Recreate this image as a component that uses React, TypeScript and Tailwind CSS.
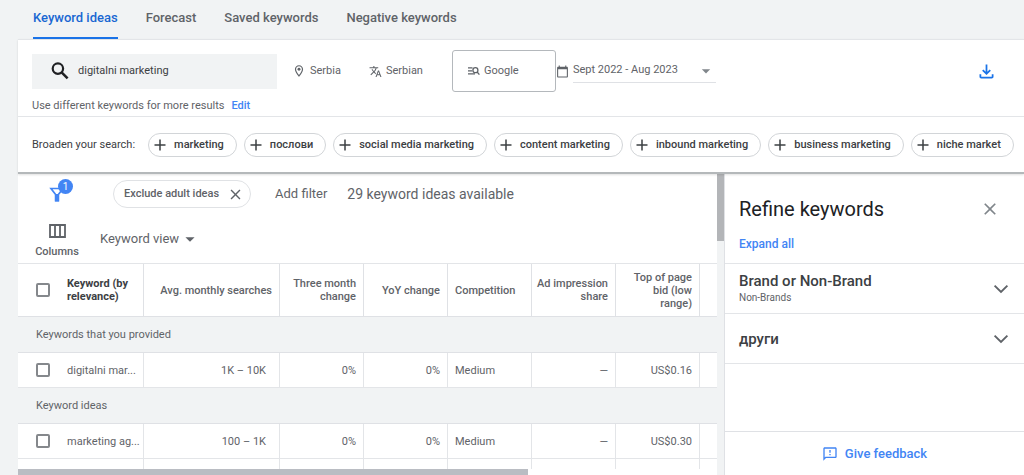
import React, { useState } from 'react';
import {
  MdArrowDropDown,
  MdCalendarToday,
  MdClose,
  MdOutlineFeedback,
  MdOutlineFileDownload,
  MdOutlineLocationOn,
  MdTranslate,
} from 'react-icons/md';

const TABS = ['Keyword ideas', 'Forecast', 'Saved keywords', 'Negative keywords'];

const BROADEN = [
  'marketing',
  'послови',
  'social media marketing',
  'content marketing',
  'inbound marketing',
  'business marketing',
  'niche market',
];

interface KeywordRow {
  keyword: string;
  searches: string;
  threeMonth: string;
  yoy: string;
  competition: string;
  share: string;
  lowBid: string;
}

const PROVIDED: KeywordRow[] = [
  { keyword: 'digitalni mar...', searches: '1K – 10K', threeMonth: '0%', yoy: '0%', competition: 'Medium', share: '—', lowBid: 'US$0.16' },
];
const IDEAS: KeywordRow[] = [
  { keyword: 'marketing ag...', searches: '100 – 1K', threeMonth: '0%', yoy: '0%', competition: 'Medium', share: '—', lowBid: 'US$0.30' },
];

const REFINE: { title: string; sub?: string }[] = [
  { title: 'Brand or Non-Brand', sub: 'Non-Brands' },
  { title: 'други' },
];

function SearchIcon() {
  return (
    <svg width="22" height="22" viewBox="0 0 22 22" fill="none" stroke="currentColor" strokeWidth="2.2" aria-hidden="true">
      <circle cx="8.9" cy="8.6" r="5.2" />
      <path d="M12.6 12.4l6 6" strokeWidth="2.6" />
    </svg>
  );
}

// List lines with a magnifier, used for the search network setting
function NetworkIcon() {
  return (
    <svg width="13" height="12" viewBox="0 0 13 12" fill="none" stroke="currentColor" strokeWidth="1.3" aria-hidden="true">
      <path d="M1 2.9h4.5M1 5.9h4M1 8.9h7" />
      <circle cx="8.4" cy="5.2" r="2.5" />
      <path d="M10.1 7l2.3 2.7" />
    </svg>
  );
}

function PlusIcon() {
  return (
    <svg width="18" height="18" viewBox="0 0 18 18" fill="none" stroke="currentColor" strokeWidth="1.5" aria-hidden="true">
      <path d="M9 3.5v11M3.5 9h11" />
    </svg>
  );
}

function FunnelIcon() {
  return (
    <svg width="18" height="18" viewBox="0 0 18 18" aria-hidden="true">
      <path d="M3 3.5h12l-4.6 6v6.2H7.6V9.5z" fill="none" stroke="currentColor" strokeWidth="1.7" />
      <path d="M7 9h4v7.4H7z" fill="currentColor" />
    </svg>
  );
}

function ColumnsIcon() {
  return (
    <svg width="17" height="14" viewBox="0 0 17 14" fill="none" stroke="currentColor" strokeWidth="1.8" aria-hidden="true">
      <path d="M1 1h15v12H1zM6 1v12M11 1v12" />
    </svg>
  );
}

function ChevronIcon() {
  return (
    <svg width="16" height="10" viewBox="0 0 16 10" fill="none" stroke="currentColor" strokeWidth="1.9" aria-hidden="true">
      <path d="M1.6 1.6L8 8l6.4-6.4" />
    </svg>
  );
}

function Check({ label }: { label: string }) {
  return (
    <input
      type="checkbox"
      aria-label={label}
      className="block size-[14px] appearance-none rounded-[2px] border-2 border-[#85888c] bg-white checked:bg-[#1a73e8]"
    />
  );
}

function GroupRow({ title }: { title: string }) {
  return (
    <tr>
      <th colSpan={9} scope="colgroup" className="h-9 border-b border-[#dfe1e5] bg-[#f1f3f4] pl-[18px] text-left font-normal">
        {title}
      </th>
    </tr>
  );
}

const CELL = 'h-[35px] border-r border-b border-[#e3e5e8] px-[7px]';

function DataRow({ row }: { row: KeywordRow }) {
  return (
    <tr>
      <td className="h-[35px] border-b border-[#e3e5e8] pl-[18px]"><Check label={row.keyword} /></td>
      <td className={`${CELL} whitespace-nowrap`}>{row.keyword}</td>
      <td className="h-[35px] border-r border-b border-[#e3e5e8] pr-[13px] text-right">{row.searches}</td>
      <td className={`${CELL} text-right`}>{row.threeMonth}</td>
      <td className={`${CELL} text-right`}>{row.yoy}</td>
      <td className={CELL}>{row.competition}</td>
      <td className={`${CELL} text-right`}>{row.share}</td>
      <td className={`${CELL} text-right`}>{row.lowBid}</td>
      <td className="border-b border-[#e3e5e8]" />
    </tr>
  );
}

const HEAD = 'h-[53px] border-r border-b border-[#dfe1e5] pr-[7px] font-medium';

function KeywordTable() {
  return (
    <table className="w-full table-fixed border-separate border-spacing-0 border-t border-[#e3e5e8] text-[11px] leading-[13px] text-[#5f6368]">
      <colgroup>
        <col className="w-[42px]" />
        <col className="w-[84px]" />
        <col className="w-[136px]" />
        <col className="w-[84px]" />
        <col className="w-[84px]" />
        <col className="w-[84px]" />
        <col className="w-[84px]" />
        <col className="w-[84px]" />
        <col />
      </colgroup>
      <thead>
        <tr>
          <th className="border-b border-[#dfe1e5] pl-[18px]"><Check label="Select all keywords" /></th>
          <th className="h-[53px] border-r border-b border-[#dfe1e5] pl-[7px] text-left font-bold text-[#3c4043]">Keyword (by relevance)</th>
          <th className={`${HEAD} text-right`}>Avg. monthly searches</th>
          <th className={`${HEAD} text-right`}>Three month change</th>
          <th className={`${HEAD} text-right`}>YoY change</th>
          <th className={`${HEAD} pl-[7px] text-left`}>Competition</th>
          <th className={`${HEAD} text-right`}>Ad impression share</th>
          <th className={`${HEAD} pl-[7px] text-right`}>Top of page bid (low range)</th>
          <td className="border-b border-[#dfe1e5]" />
        </tr>
      </thead>
      <tbody>
        <GroupRow title="Keywords that you provided" />
        {PROVIDED.map((row) => <DataRow key={row.keyword} row={row} />)}
        <GroupRow title="Keyword ideas" />
        {IDEAS.map((row) => <DataRow key={row.keyword} row={row} />)}
        {/* next row, still below the fold */}
        <tr>
          <td className="h-[35px]" />
          {[1, 2, 3, 4, 5, 6, 7].map((n) => <td key={n} className="border-r border-[#e3e5e8]" />)}
          <td />
        </tr>
      </tbody>
    </table>
  );
}

export default function App() {
  const [tab, setTab] = useState(TABS[0]);
  const [query, setQuery] = useState('digitalni marketing');

  return (
    <div className="flex h-screen flex-col overflow-hidden bg-[#f1f3f4] pl-[18px] font-['Roboto','Noto_Sans',sans-serif] text-[11px] text-[#5f6368]">
      <nav className="flex shrink-0 gap-7 px-[15px] text-[13px] font-medium">
        {TABS.map((t) => (
          <button
            key={t}
            type="button"
            onClick={() => setTab(t)}
            className={`h-[39px] border-b-2 pb-[1px] ${t === tab ? 'border-[#1a73e8] text-[#1967d2]' : 'border-transparent'}`}
          >
            {t}
          </button>
        ))}
      </nav>

      <header className="relative z-10 shrink-0 border-b-2 border-[#b4b8ba] bg-white shadow-[0_1px_2px_rgba(0,0,0,0.12)]">
        <div className="border-y border-[#e3e5e8] px-[14px] pt-[10px]">
          <div className="flex h-[42px] items-center">
            <label className="flex h-[35px] w-[245px] items-center bg-[#f1f3f4] pl-[17px] text-[#202124]">
              <SearchIcon />
              <input
                aria-label="Keywords"
                value={query}
                onChange={(e) => setQuery(e.target.value)}
                className="ml-[7px] min-w-0 flex-1 bg-transparent text-[11px] text-[#3c4043] outline-none"
              />
            </label>
            <button type="button" className="ml-[15px] flex items-center gap-1">
              <MdOutlineLocationOn size={14} />
              Serbia
            </button>
            <button type="button" className="ml-7 flex items-center gap-1">
              <MdTranslate size={13} />
              Serbian
            </button>
            <button type="button" className="ml-[29px] flex h-[42px] w-[104px] items-center gap-1 rounded-[3px] border border-[#b4b8bc] pl-[14px]">
              <NetworkIcon />
              Google
            </button>
            <label className="flex items-center gap-1">
              <MdCalendarToday size={13} />
              <span className="relative flex items-center border-b border-[#dfe1e5]">
                <select aria-label="Date range" className="h-[22px] w-[143px] appearance-none bg-transparent text-[11px] outline-none">
                  <option>Sept 2022 - Aug 2023</option>
                </select>
                <MdArrowDropDown size={20} className="pointer-events-none absolute right-0 text-[#80868b]" />
              </span>
            </label>
            <button type="button" aria-label="Download" className="mr-[13px] ml-auto text-[#1a73e8]">
              <MdOutlineFileDownload size={21} />
            </button>
          </div>
          <p className="pt-1 leading-5">
            Use different keywords for more results
            <a href="#edit" className="ml-[7px] font-medium text-[#4285f4]">Edit</a>
          </p>
        </div>

        <div className="flex h-[55px] items-center gap-[7px] px-[14px] pt-px whitespace-nowrap">
          <span className="mr-[6px] text-[#3c4043]">Broaden your search:</span>
          {BROADEN.map((term) => (
            <button
              key={term}
              type="button"
              className="flex h-6 items-center gap-[5px] rounded-full border border-[#d2d5d8] pr-3 pl-[2px] font-medium text-[#3c4043]"
            >
              <PlusIcon />
              {term}
            </button>
          ))}
        </div>
      </header>

      <div className="flex min-h-0 flex-1">
        <main className="flex min-w-0 flex-1 flex-col overflow-hidden bg-white">
          <div className="flex h-10 shrink-0 items-center text-[13px]">
            <button type="button" aria-label="Filters" className="relative flex w-[78px] justify-center text-[#4285f4]">
              <FunnelIcon />
              <span className="absolute -top-[6px] left-10 flex size-[15px] items-center justify-center rounded-full bg-[#4285f4] text-[10px] leading-none text-white">1</span>
            </button>
            <div className="ml-[17px] flex h-7 items-center gap-2 rounded-full border border-[#e0e2e5] pr-[6px] pl-[10px] text-[11px] font-medium">
              Exclude adult ideas
              <button type="button" aria-label="Remove filter"><MdClose size={17} /></button>
            </div>
            <button type="button" className="ml-6">Add filter</button>
            <span className="ml-5 text-[14px]">29 keyword ideas available</span>
          </div>
          <div className="flex h-[49px] shrink-0 items-center">
            <button type="button" className="flex w-[78px] flex-col items-center gap-[6px] pt-2 font-medium">
              <ColumnsIcon />
              Columns
            </button>
            <button type="button" className="ml-1 flex items-center text-[13px]">
              Keyword view
              <MdArrowDropDown size={22} />
            </button>
          </div>
          <div className="min-h-0 flex-1 overflow-hidden">
            <KeywordTable />
          </div>
          <div className="h-[6px] shrink-0 bg-white">
            <div className="h-full w-[73%] bg-[#babdc3]" />
          </div>
        </main>
        <div className="w-[7px] shrink-0 bg-[#f1f3f4]">
          <div className="h-[67px] bg-[#b3b5b8]" />
        </div>

        <aside className="flex w-[300px] shrink-0 flex-col border-l border-[#dfe1e5] bg-white">
          <div className="flex h-[90px] shrink-0 flex-col border-b border-[#e3e5e8] pr-6 pl-[14px]">
            <div className="mt-5 flex items-center justify-between">
              <h2 className="text-[20px] leading-[30px] text-[#202124]">Refine keywords</h2>
              <button type="button" aria-label="Close"><MdClose size={20} className="text-[#80868b]" /></button>
            </div>
            <button type="button" className="mt-3 self-start text-[12px] leading-4 font-medium text-[#4285f4]">Expand all</button>
          </div>
          {REFINE.map((item) => (
            <button
              key={item.title}
              type="button"
              className="flex h-[50px] shrink-0 items-center justify-between border-b border-[#e3e5e8] pr-[15px] pl-[14px] text-left"
            >
              <span>
                <span className="block text-[15px] leading-[18px] font-medium text-[#3c4043]">{item.title}</span>
                {item.sub && <span className="block text-[10px] leading-4">{item.sub}</span>}
              </span>
              <ChevronIcon />
            </button>
          ))}
          <div className="mt-auto flex h-11 shrink-0 items-center justify-center border-t border-[#dfe1e5]">
            <button type="button" className="flex items-center gap-[7px] text-[13px] font-medium text-[#4285f4]">
              <MdOutlineFeedback size={16} />
              Give feedback
            </button>
          </div>
        </aside>
      </div>
    </div>
  );
}
